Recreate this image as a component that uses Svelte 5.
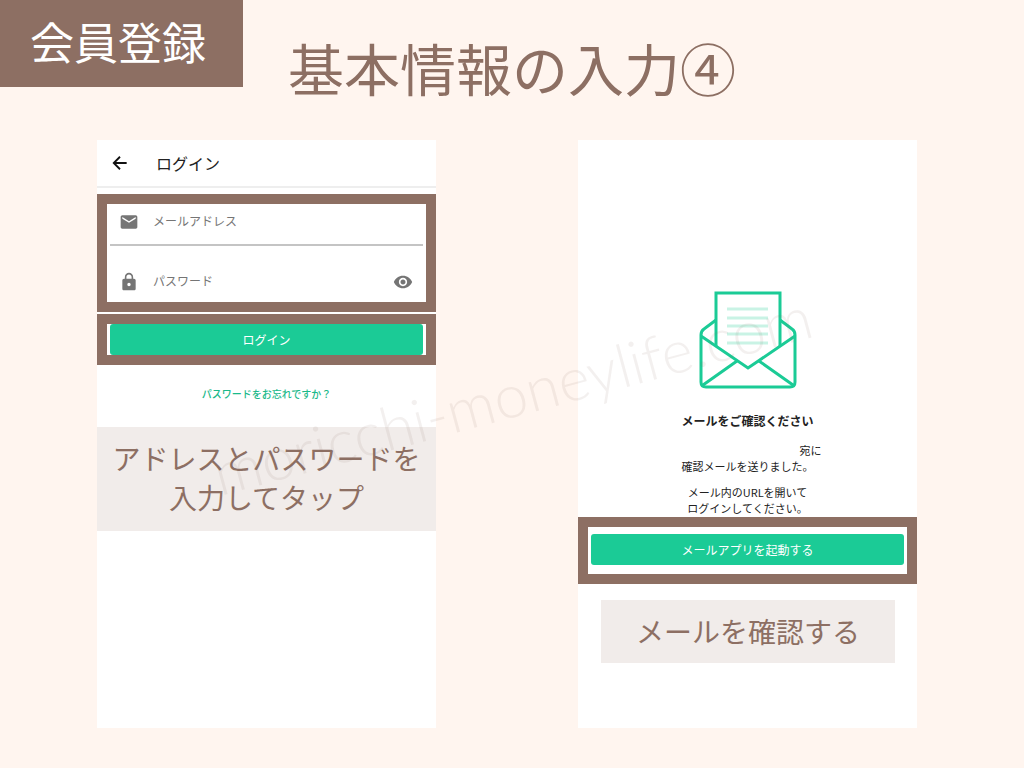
<script lang="ts">
  let email = $state("");
  let password = $state("");
  let showPassword = $state(false);
</script>

<div class="page">
  <header class="page-header">
    <p class="badge">会員登録</p>
    <h1>基本情報の入力④</h1>
  </header>

  <main class="screens">
    <!-- Login screen -->
    <section class="screen">
      <div class="app-bar">
        <button class="icon-button" type="button" aria-label="戻る">
          <svg width="20" height="20" viewBox="0 0 24 24" fill="none" stroke="#111" stroke-width="2.2">
            <path d="M20 12H5M12 4.5L4.5 12l7.500 7.500" />
          </svg>
        </button>
        <h2>ログイン</h2>
      </div>

      <form onsubmit={(e) => e.preventDefault()}>
        <div class="frame">
          <div class="field underlined">
            <label for="email" aria-label="メールアドレス">
              <svg width="20" height="20" viewBox="0 0 24 24" fill="#757575">
                <path d="M20 4H4c-1.100 0-2 .9-2 2v12c0 1.100.9 2 2 2h16c1.100 0 2-.9 2-2V6c0-1.100-.9-2-2-2zm0 4l-8 5-8-5V6l8 5 8-5v2z" />
              </svg>
            </label>
            <input id="email" type="email" placeholder="メールアドレス" bind:value={email} />
          </div>
          <div class="field">
            <label for="password" aria-label="パスワード">
              <svg width="20" height="20" viewBox="0 0 24 24" fill="#757575">
                <path d="M18 8h-1V6c0-2.760-2.240-5-5-5S7 3.240 7 6v2H6c-1.100 0-2 .9-2 2v10c0 1.100.9 2 2 2h12c1.100 0 2-.9 2-2V10c0-1.100-.9-2-2-2zm-6 9c-1.100 0-2-.9-2-2s.9-2 2-2 2 .9 2 2-.9 2-2 2zm3.100-9H8.900V6c0-1.710 1.390-3.100 3.100-3.100s3.100 1.390 3.100 3.100v2z" />
              </svg>
            </label>
            <input
              id="password"
              type={showPassword ? "text" : "password"}
              placeholder="パスワード"
              bind:value={password}
            />
            <button
              class="icon-button"
              type="button"
              aria-label="パスワードを表示"
              onclick={() => (showPassword = !showPassword)}
            >
              <svg width="20" height="20" viewBox="0 0 24 24" fill="#757575">
                <path d="M12 4.500C7 4.500 2.730 7.610 1 12c1.730 4.390 6 7.500 11 7.500s9.270-3.110 11-7.500c-1.730-4.390-6-7.500-11-7.500zM12 17c-2.760 0-5-2.240-5-5s2.240-5 5-5 5 2.240 5 5-2.240 5-5 5zm0-8c-1.660 0-3 1.340-3 3s1.340 3 3 3 3-1.340 3-3-1.340-3-3-3z" />
              </svg>
            </button>
          </div>
        </div>

        <div class="frame">
          <button class="primary" type="submit">ログイン</button>
        </div>
      </form>

      <a class="forgot" href="#reset">パスワードをお忘れですか？</a>

      <p class="note">アドレスとパスワードを<br />入力してタップ</p>
    </section>

    <!-- Mail confirmation screen -->
    <section class="screen confirm">
      <svg class="envelope" width="98" height="98" viewBox="0 0 98 98" fill="none" stroke="#1bcb96" stroke-width="3">
        <path d="M17 29L5 38Q2 40 2 44V91Q2 96 7 96H91Q96 96 96 91V44Q96 40 93 38L81 29" />
        <path d="M2 45L49 77L96 45" />
        <path d="M4 94L38 70M94 94L60 70" />
        <path d="M17 55V2H81V55" />
        <path d="M28 18H69M28 27H69M28 35H69M28 43H69M28 52H69" stroke="#c9f3e5" />
      </svg>

      <h2>メールをご確認ください</h2>
      <p class="message"><span class="address"></span>宛に<br />確認メールを送りました。</p>
      <p class="message">メール内のURLを開いて<br />ログインしてください。</p>

      <div class="frame roomy">
        <button class="primary" type="button">メールアプリを起動する</button>
      </div>

      <p class="note inset">メールを確認する</p>
    </section>
  </main>

  <div class="watermark" aria-hidden="true">moricchi-moneylife.com</div>
</div>

<style>
  :global(body) {
    margin: 0;
  }

  .page {
    position: relative;
    display: flex;
    flex-direction: column;
    box-sizing: border-box;
    min-height: 100vh;
    padding-bottom: 40px;
    overflow: hidden;
    background: #fff5ef;
    color: #222;
    font-family: "Noto Sans CJK JP", sans-serif;
  }

  h1,
  h2,
  p {
    margin: 0;
  }

  button,
  input {
    font-family: inherit;
  }

  .page-header {
    display: grid;
    grid-template-columns: 1fr auto 1fr;
    align-items: start;
    height: 140px;
  }

  .badge {
    justify-self: start;
    padding: 0 37px 4px 30px;
    background: #8d6f63;
    color: #fff;
    font-size: 44px;
    line-height: 83px;
  }

  h1 {
    color: #8d6f63;
    font-size: 56px;
    font-weight: 400;
    line-height: 134px;
  }

  .screens {
    display: grid;
    flex: 1;
    grid-template-columns: 1fr 1fr;
    gap: 142px;
    padding: 0 107px 0 97px;
  }

  .screen {
    display: flex;
    flex-direction: column;
    background: #fff;
  }

  .app-bar {
    display: flex;
    align-items: center;
    gap: 26px;
    height: 46px;
    margin-bottom: 6px;
    padding-left: 13px;
    border-bottom: 2px solid #eee;
  }

  .app-bar h2 {
    font-size: 16px;
    font-weight: 400;
  }

  .icon-button {
    display: flex;
    padding: 0;
    border: 0;
    background: none;
    cursor: pointer;
  }

  form {
    display: flex;
    flex-direction: column;
    gap: 2px;
  }

  .frame {
    padding: 0 3px;
    border: 10px solid #8d6f63;
  }

  .frame.roomy {
    padding: 7px 3px 9px;
  }

  .field {
    display: flex;
    align-items: center;
    gap: 14px;
    height: 40px;
    padding: 0 10px 0 9px;
  }

  .field.underlined {
    height: 36px;
    margin-bottom: 16px;
    padding-bottom: 4px;
    border-bottom: 2px solid #c4c4c4;
  }

  .field label {
    display: flex;
  }

  .field input {
    flex: 1;
    min-width: 0;
    padding: 0 0 4px;
    border: 0;
    outline: 0;
    background: none;
    color: #222;
    font-size: 12px;
  }

  .field input::placeholder {
    color: #757575;
    opacity: 1;
  }

  .primary {
    display: block;
    width: 100%;
    height: 31px;
    padding: 0;
    border: 0;
    border-radius: 3px;
    background: #1bcb96;
    color: #fff;
    font-size: 12px;
    cursor: pointer;
  }

  .forgot {
    align-self: center;
    margin: 19px 0 23px;
    color: #1bb98a;
    font-size: 10px;
    font-weight: 500;
    line-height: 20px;
    text-decoration: none;
  }

  .note {
    padding: 12px 0 14px;
    background: #f1ecea;
    color: #8d6f63;
    font-size: 28px;
    line-height: 39px;
    text-align: center;
  }

  .note.inset {
    margin: 16px 22px 0 23px;
    padding: 12px 0;
  }

  .confirm {
    text-align: center;
  }

  .envelope {
    align-self: center;
    margin: 151px 0 22px;
  }

  .confirm h2 {
    margin-bottom: 11px;
    font-size: 12px;
    line-height: 20px;
  }

  .message {
    margin-bottom: 10px;
    font-size: 11px;
    line-height: 16px;
  }

  .message + .frame {
    margin-top: -9px;
  }

  /* blank space where the recipient's address is hidden */
  .address {
    display: inline-block;
    width: 126px;
  }

  .watermark {
    position: absolute;
    top: 394px;
    left: 50%;
    color: rgba(141, 111, 99, 0.1);
    font-family: Lato, sans-serif;
    font-size: 60px;
    font-weight: 300;
    line-height: 1;
    white-space: nowrap;
    pointer-events: none;
    transform: translate(-50%, -50%) rotate(-15deg);
  }
</style>
